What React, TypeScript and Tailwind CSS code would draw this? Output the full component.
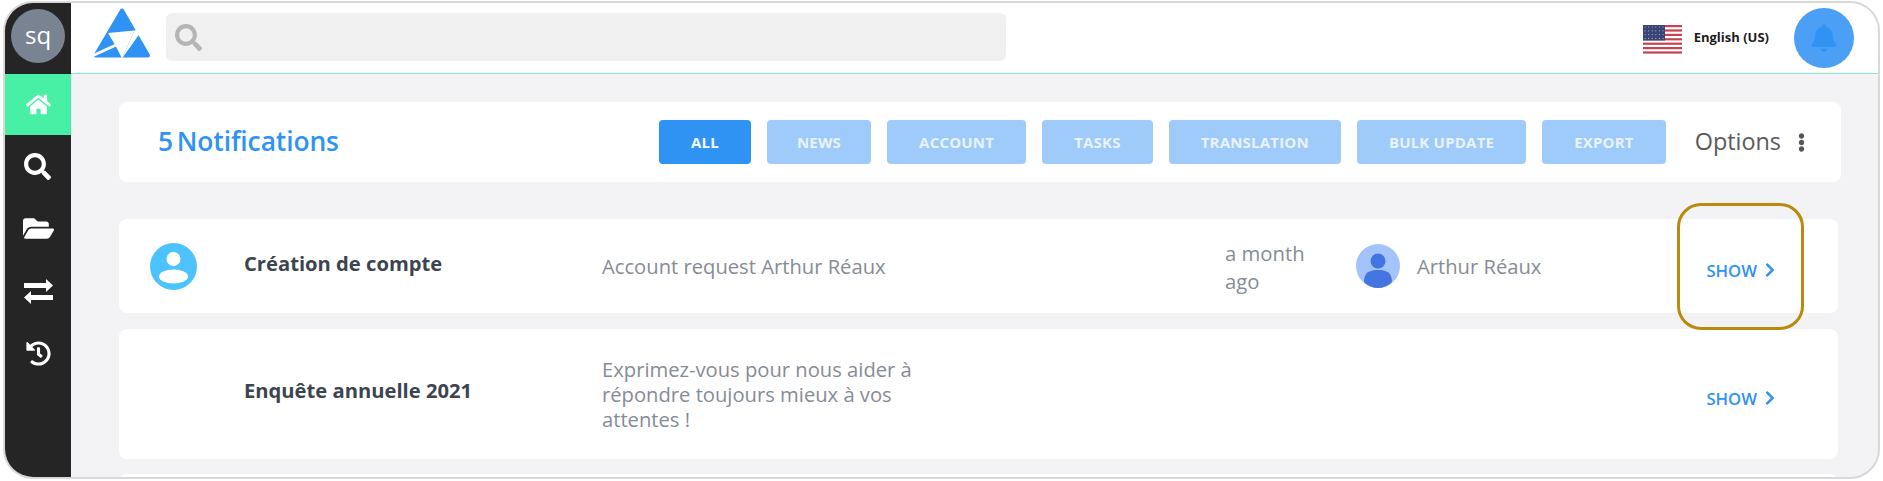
import React from 'react';
import {
  FaBell,
  FaChevronRight,
  FaEllipsisV,
  FaFolderOpen,
  FaHistory,
  FaHome,
  FaSearch,
} from 'react-icons/fa';

const tabs = ['ALL', 'NEWS', 'ACCOUNT', 'TASKS', 'TRANSLATION', 'BULK UPDATE', 'EXPORT'];

function Logo() {
  return (
    <svg width="68" height="60" viewBox="0 0 68 60">
      <path d="M34 6.5 L7.5 51.5 L60 51.5 Z" fill="#2f93f5" stroke="#2f93f5" strokeWidth="4" strokeLinejoin="round" />
      <path d="M20 29 L46.5 26.5 L34 54.5 L28 42.5 Z" fill="#fff" />
      <path d="M46.5 26.5 L56 24 L56 29 L51 30.5 L34 54.5 Z" fill="#fff" />
      <path d="M28 41 L3 52.5" stroke="#fff" strokeWidth="3" />
    </svg>
  );
}

function ExchangeIcon() {
  return (
    <svg width="29" height="25" viewBox="0 0 29 25" fill="#fff">
      <path d="M0 4 H22 V0 L29 6.5 L22 13 V9 H0 Z" />
      <path d="M29 16 H7 V12 L0 18.5 L7 25 V21 H29 Z" />
    </svg>
  );
}

function UsFlag() {
  const stripes = [0, 1, 2, 3, 4, 5, 6];
  const rows = [0, 1, 2, 3];
  const cols = [0, 1, 2, 3, 4, 5];
  return (
    <svg width="39" height="29" viewBox="0 0 39 29">
      <rect width="39" height="29" fill="#fff" />
      {stripes.map(i => (
        <rect key={i} y={i * 4.4} width="39" height="2.2" fill="#c8424f" />
      ))}
      <rect width="22" height="15.5" fill="#3a4476" />
      {rows.map(r =>
        cols.map(c => <circle key={`${r}-${c}`} cx={2 + c * 3.6} cy={2 + r * 3.8} r="0.6" fill="#aab0cc" />)
      )}
    </svg>
  );
}

function UserAvatar() {
  return (
    <svg width="47" height="47" viewBox="0 0 47 47">
      <circle cx="23.5" cy="23.5" r="23.5" fill="#4dc3fd" />
      <circle cx="23.5" cy="16" r="7" fill="#fff" />
      <ellipse cx="23.5" cy="33.5" rx="14.5" ry="7" fill="#fff" />
    </svg>
  );
}

function AuthorAvatar() {
  return (
    <svg width="44" height="44" viewBox="0 0 44 44">
      <circle cx="22" cy="22" r="22" fill="#a3c4fb" />
      <circle cx="22" cy="17" r="7.5" fill="#4474df" />
      <path d="M8 38 C8 28 14 26 22 26 C30 26 36 28 36 38 C32 42 27 44 22 44 C17 44 12 42 8 38Z" fill="#4474df" />
    </svg>
  );
}

function ShowLink() {
  return (
    <div className="mt-[9px] flex items-center gap-[5px] text-[16.7px] font-semibold text-[#2f93f5]">
      SHOW
      <FaChevronRight className="text-[16px]" />
    </div>
  );
}

export default function App() {
  return (
    <div className="h-[481px] w-[1883px] overflow-hidden bg-white pl-[3px] pt-[1px] font-['Open_Sans',sans-serif]">
      <div className="relative flex h-[478px] w-[1877px] overflow-hidden rounded-[30px] border-2 border-[#d8d8d8] bg-[#f3f3f5]">
        {/* Sidebar */}
        <aside className="flex w-[66px] shrink-0 flex-col bg-[#252525] text-white">
          <div className="flex h-[71px] items-start justify-center pt-[6px]">
            <div className="flex h-[54px] w-[54px] items-center justify-center rounded-full bg-[#798392] pb-[2px] text-[24px] text-white">
              sq
            </div>
          </div>
          <div className="flex h-[61px] items-center justify-center bg-[#48f0a6] pb-[1px] text-[25px]">
            <FaHome />
          </div>
          <div className="flex h-[62px] items-center justify-center pr-[1px] text-[27px]">
            <FaSearch />
          </div>
          <div className="flex h-[62px] items-center justify-center text-[31px]">
            <FaFolderOpen />
          </div>
          <div className="flex h-[62px] items-center justify-center pt-[3px]">
            <ExchangeIcon />
          </div>
          <div className="flex h-[62px] items-center justify-center pt-[2px] text-[25px]">
            <FaHistory />
          </div>
        </aside>

        <div className="flex min-w-0 flex-1 flex-col">
          {/* Top bar */}
          <header className="flex h-[71px] shrink-0 items-start border-b border-[#86eec0] bg-white">
            <div className="ml-[17px] mt-[1px]">
              <Logo />
            </div>
            <div className="ml-[10px] mt-[10px] flex h-[48px] w-[840px] items-center rounded-[6px] bg-[#f0f0f0] pl-[9px] text-[27px] text-[#b5b5b5]">
              <FaSearch />
            </div>
            <div className="ml-auto mr-[24px] mt-[5px] flex items-center">
              <div className="mt-[2px]">
                <UsFlag />
              </div>
              <span className="ml-[12px] text-[13px] font-bold text-[#1c1c1c]">English (US)</span>
              <div className="ml-[25px] flex h-[60px] w-[60px] items-center justify-center rounded-full bg-[#4b9ff5] text-[28px] text-[#2f93f5]">
                <FaBell />
              </div>
            </div>
          </header>

          {/* Content */}
          <main className="min-h-0 flex-1 pl-[48px] pr-[37px] pt-[28px]">
            <div className="flex h-[80px] items-center justify-between rounded-[8px] bg-white pl-[39px] pr-[30px]">
              <h1 className="pb-[1px] text-[26.4px] font-semibold tracking-[-0.1px] text-[#2f93f5] [word-spacing:-3px]">5 Notifications</h1>
              <div className="flex items-center">
                <div className="flex gap-[16px]">
                  {tabs.map((tab, i) => (
                    <button
                      key={tab}
                      className={
                        i === 0
                          ? 'h-[44px] rounded-[4px] bg-[#2f93f3] px-[32px] text-[15px] font-bold tracking-[0.2px] text-[#f4f9fe]'
                          : i === 1
                            ? 'h-[44px] rounded-[4px] bg-[#9fcbfa] px-[30px] text-[15px] font-bold tracking-[0.2px] text-[#e9f3fe]'
                            : 'h-[44px] rounded-[4px] bg-[#9fcbfa] px-[32px] text-[15px] font-bold tracking-[0.2px] text-[#e9f3fe]'
                      }
                    >
                      {tab}
                    </button>
                  ))}
                </div>
                <span className="ml-[29px] text-[23.4px] text-[#5a5a5a]">Options</span>
                <FaEllipsisV className="ml-[11px] text-[19px] text-[#555]" />
              </div>
            </div>

            <div className="mr-[3px] mt-[37px] flex h-[94px] items-center rounded-[8px] bg-white pr-[60px]">
              <div className="ml-[31px] w-[94px]">
                <UserAvatar />
              </div>
              <div className="w-[358px] pb-[5px] text-[20.2px] font-bold text-[#3c4450]">Création de compte</div>
              <div className="w-[623px] text-[20.2px] text-[#858c96]">Account request Arthur Réaux</div>
              <div className="w-[131px] pt-[1px] text-[20.3px] leading-[28px] text-[#858c96]">
                a month
                <br />
                ago
              </div>
              <div className="flex items-center gap-[17px] text-[20.2px] text-[#858c96]">
                <AuthorAvatar />
                Arthur Réaux
              </div>
              <div className="ml-auto">
                <ShowLink />
              </div>
            </div>

            <div className="mr-[3px] mt-[16px] flex h-[130px] items-center rounded-[8px] bg-white pr-[60px]">
              <div className="ml-[125px] w-[358px] pb-[7px] text-[20.2px] font-bold text-[#3c4450]">Enquête annuelle 2021</div>
              <div className="w-[340px] text-[20.2px] leading-[25px] text-[#858c96]">
                Exprimez-vous pour nous aider à répondre toujours mieux à vos attentes !
              </div>
              <div className="ml-auto">
                <ShowLink />
              </div>
            </div>

            <div className="mr-[3px] mt-[15px] h-[40px] rounded-[8px] bg-white" />
          </main>
        </div>

        {/* Highlight around the first SHOW link */}
        <div className="absolute left-[1672px] top-[200px] h-[127px] w-[127px] rounded-[24px] border-[3px] border-[#b98a0c]" />
      </div>
    </div>
  );
}
